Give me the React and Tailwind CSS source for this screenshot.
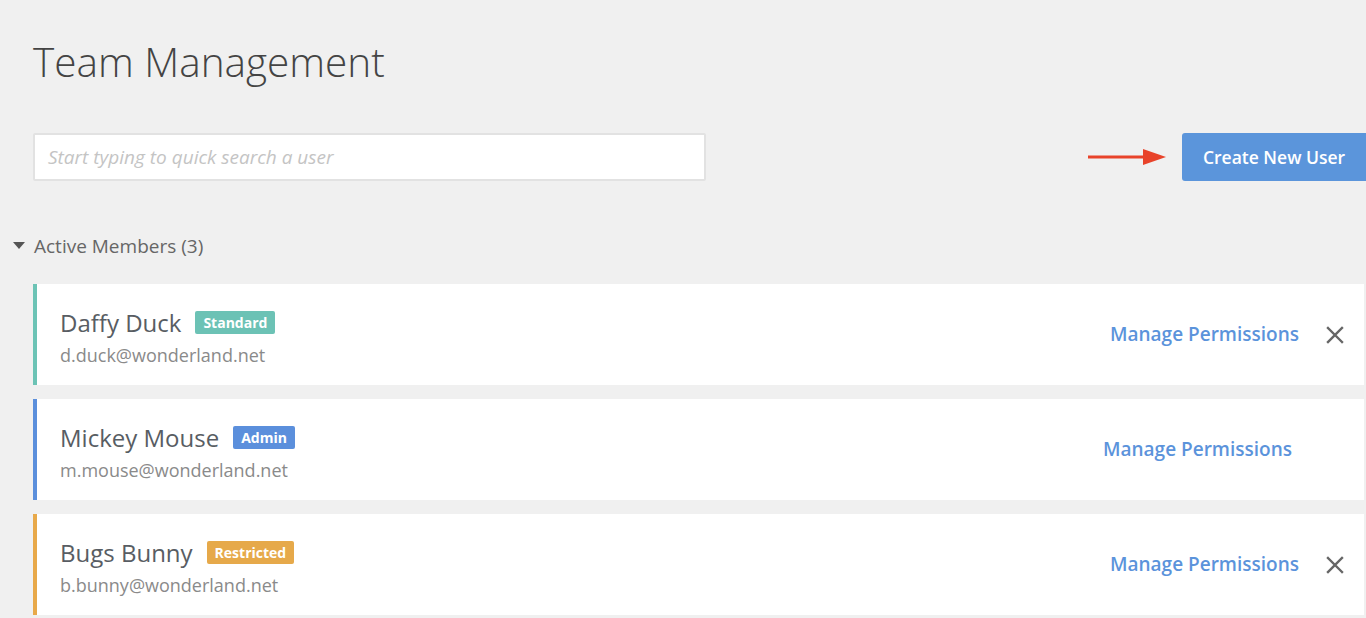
import React from "react";

const members = [
  { name: "Daffy Duck", email: "d.duck@wonderland.net", role: "Standard", bar: "border-[#6cc3b5]", badge: "bg-[#6cc2b5]", remove: true },
  { name: "Mickey Mouse", email: "m.mouse@wonderland.net", role: "Admin", bar: "border-[#5b8fdc]", badge: "bg-[#5b8fdc]", remove: false },
  { name: "Bugs Bunny", email: "b.bunny@wonderland.net", role: "Restricted", bar: "border-[#e8a94a]", badge: "bg-[#e6a94a]", remove: true },
];

const CloseIcon = () => (
  <svg width="18" height="18" viewBox="0 0 18 18" className="text-[#666]">
    <path d="M2 2 L16 16 M16 2 L2 16" stroke="currentColor" strokeWidth="2.4" strokeLinecap="square" />
  </svg>
);

const Arrow = () => (
  <svg width="78" height="18" viewBox="0 0 78 18">
    <rect x="0" y="7.5" width="58" height="3" fill="#e8432a" />
    <polygon points="55,1 78,9 55,17" fill="#e8432a" />
  </svg>
);

export default function App() {
  return (
    <div className="h-[618px] w-full overflow-hidden bg-[#f0f0f0] text-[#555]" style={{ fontFamily: "'Open Sans', sans-serif" }}>
      {/* Header */}
      <h1 className="pl-[33px] pt-[37px] text-[40.5px] font-light leading-[50px] text-[#444]">Team Management</h1>

      {/* Search row */}
      <div className="mt-[46px] flex items-center justify-between pl-[33px]">
        <div className="flex h-[48px] w-[673px] items-center rounded-[2px] border-2 border-[#e2e2e2] bg-white px-[13px]">
          <span className="text-[19px] italic text-[#c4c4c4]">Start typing to quick search a user</span>
        </div>
        <div className="flex items-center gap-[16px]">
          <Arrow />
          <button className="h-[48px] w-[184px] rounded-l-[3px] bg-[#5b95db] text-[17.5px] font-semibold text-white">
            Create New User
          </button>
        </div>
      </div>

      {/* Section toggle */}
      <div className="mt-[50px] flex h-[30px] items-center pl-[13px]">
        <svg width="12" height="8" viewBox="0 0 12 8" className="mr-[9px]">
          <polygon points="0,0 12,0 6,7" fill="#555" />
        </svg>
        <span className="text-[19px] text-[#666]">Active Members (3)</span>
      </div>

      {/* Members */}
      <div className="mt-[23px] flex flex-col gap-[14px] pl-[33px] pr-[2px]">
        {members.map((m) => (
          <div key={m.name} className={`flex h-[101px] items-center justify-between border-l-4 bg-white pl-[23px] ${m.bar}`}>
            <div className="flex flex-col pt-[5px]">
              <div className="flex items-center">
                <span className="text-[24px] leading-[30px] text-[#585d63]">{m.name}</span>
                <span className={`ml-[14px] rounded-[2px] px-[8px] text-[14px] font-bold leading-[23px] text-white ${m.badge}`}>{m.role}</span>
              </div>
              <span className="mt-[5px] text-[18px] leading-[24px] text-[#8a8a8a]">{m.email}</span>
            </div>
            {m.remove ? (
              <div className="flex items-center pr-[20px]">
                <span className="text-[19px] font-semibold text-[#5b93db]">Manage Permissions</span>
                <span className="ml-[27px]">
                  <CloseIcon />
                </span>
              </div>
            ) : (
              <div className="flex items-center pr-[72px]">
                <span className="text-[19px] font-semibold text-[#5b93db]">Manage Permissions</span>
              </div>
            )}
          </div>
        ))}
      </div>
    </div>
  );
}
